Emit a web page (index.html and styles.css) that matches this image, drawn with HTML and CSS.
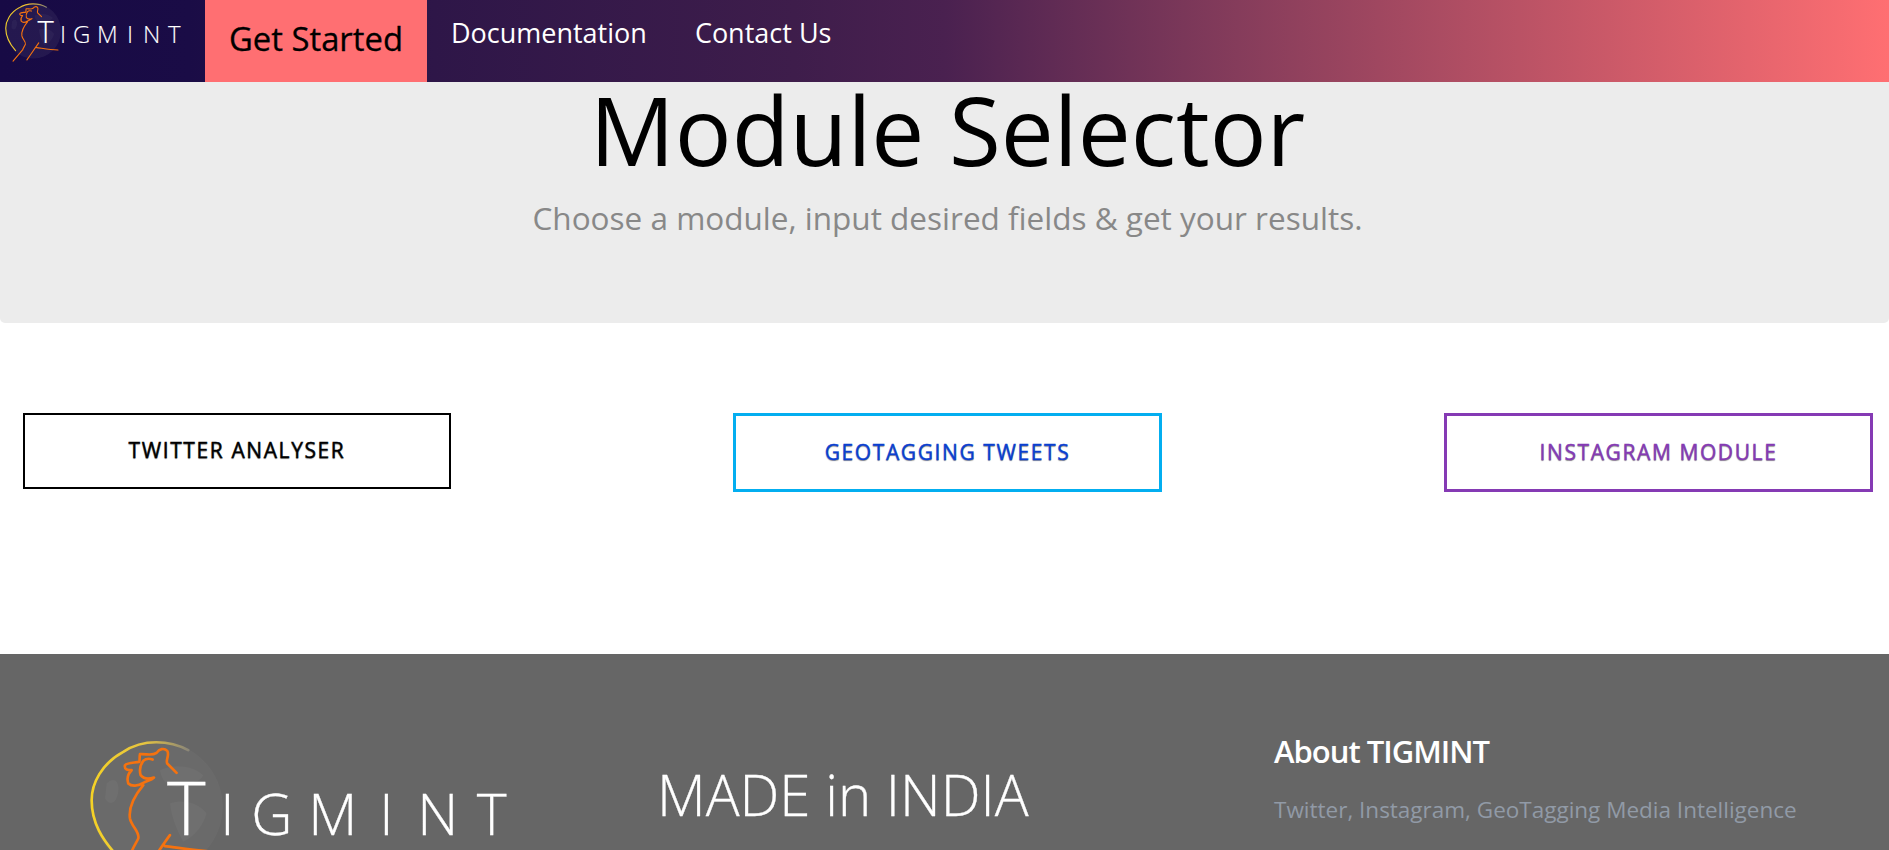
FILE: index.html
```html
<!DOCTYPE html>
<html lang="en">
<head>
<meta charset="utf-8">
<title>Tigmint - Module Selector</title>
<link rel="stylesheet" href="styles.css">
</head>
<body>
<header class="topbar">
  <a class="brand" href="#">
    <svg class="logo logo-small" viewBox="0 0 185 82" aria-label="Tigmint logo">
      <defs>
        <linearGradient id="arcA" x1="1" y1="0" x2="0" y2="0">
          <stop offset="0" stop-color="#8a8470"/><stop offset="0.45" stop-color="#e8b830"/><stop offset="1" stop-color="#f2d02c"/>
        </linearGradient>
      </defs>
      <circle class="globe globe-dark" cx="33.5" cy="31" r="27.5"/>
      <g transform="translate(-7.58 -5.47) scale(.14035)">
        <path class="land" d="M300 150C340 130 400 135 430 165C420 190 380 185 360 200C330 205 305 185 300 150ZM330 250C370 235 420 250 440 280C430 320 400 350 370 365C350 330 335 290 330 250ZM140 190C160 170 180 180 175 215C170 250 150 260 135 235Z"/>
        <path class="arc" stroke="url(#arcA)" d="M385 90C330 60 250 55 190 95C125 130 95 190 95 240C95 310 130 360 165 400"/>
        <path class="fig" d="M350 158L322 130C316 120 330 105 322 92C312 82 298 86 290 98C275 108 258 100 240 102C238 112 240 120 238 125C220 128 200 128 195 135C192 150 205 150 215 150C205 160 200 175 205 190C215 200 235 198 250 188C262 182 275 180 282 172C265 178 250 175 242 165C238 150 240 135 250 122C258 115 270 115 278 118M250 195C225 225 205 260 210 295C215 320 240 335 235 355C228 370 220 380 215 395L147 474M330 345C315 365 285 410 246 466M315 378C340 380 400 392 467 395"/>
      </g>
      <text class="logo-text" y="43"><tspan class="logo-t" x="37.5">T</tspan><tspan x="60">I</tspan><tspan x="73">G</tspan><tspan x="97">M</tspan><tspan x="127">I</tspan><tspan x="143">N</tspan><tspan x="168">T</tspan></text>
    </svg>
  </a>
  <a class="nav-active" href="#">Get Started</a>
  <nav class="nav">
    <a href="#">Documentation</a>
    <a href="#">Contact Us</a>
  </nav>
</header>

<section class="jumbo">
  <h1>Module Selector</h1>
  <p>Choose a module, input desired fields &amp; get your results.</p>
</section>

<main class="modules">
  <a class="mod mod-twitter" href="#">TWITTER ANALYSER</a>
  <a class="mod mod-geo" href="#">GEOTAGGING TWEETS</a>
  <a class="mod mod-insta" href="#">INSTAGRAM MODULE</a>
</main>

<footer class="footer">
  <div class="foot-logo">
    <svg class="logo logo-large" viewBox="0 0 185 82" aria-label="Tigmint logo">
      <defs>
        <linearGradient id="arcB" x1="1" y1="0" x2="0" y2="0">
          <stop offset="0" stop-color="#8a8678"/><stop offset="0.45" stop-color="#e6c440"/><stop offset="1" stop-color="#f5d226"/>
        </linearGradient>
      </defs>
      <circle class="globe" cx="33.5" cy="31" r="27.5"/>
      <g transform="translate(-7.58 -5.47) scale(.14035)">
        <path class="land" d="M300 150C340 130 400 135 430 165C420 190 380 185 360 200C330 205 305 185 300 150ZM330 250C370 235 420 250 440 280C430 320 400 350 370 365C350 330 335 290 330 250ZM140 190C160 170 180 180 175 215C170 250 150 260 135 235Z"/>
        <path class="arc" stroke="url(#arcB)" d="M385 90C330 60 250 55 190 95C125 130 95 190 95 240C95 310 130 360 165 400"/>
        <path class="fig" d="M350 158L322 130C316 120 330 105 322 92C312 82 298 86 290 98C275 108 258 100 240 102C238 112 240 120 238 125C220 128 200 128 195 135C192 150 205 150 215 150C205 160 200 175 205 190C215 200 235 198 250 188C262 182 275 180 282 172C265 178 250 175 242 165C238 150 240 135 250 122C258 115 270 115 278 118M250 195C225 225 205 260 210 295C215 320 240 335 235 355C228 370 220 380 215 395L147 474M330 345C315 365 285 410 246 466M315 378C340 380 400 392 467 395"/>
      </g>
      <text class="logo-text" y="43"><tspan class="logo-t" x="37.5">T</tspan><tspan x="60">I</tspan><tspan x="73">G</tspan><tspan x="97">M</tspan><tspan x="127">I</tspan><tspan x="143">N</tspan><tspan x="168">T</tspan></text>
    </svg>
  </div>
  <div class="foot-made">MADE in INDIA</div>
  <div class="foot-about">
    <h5>About TIGMINT</h5>
    <p>Twitter, Instagram, GeoTagging Media Intelligence</p>
  </div>
</footer>
</body>
</html>
```

FILE: styles.css
```css
* { box-sizing: border-box; }
html, body { margin: 0; height: 850px; overflow: hidden; }
body { font-family: "Open Sans", sans-serif; background: #fff; color: #000; }
a { text-decoration: none; color: inherit; }

.topbar {
  display: flex;
  height: 82px;
  background: linear-gradient(90deg, #170a45 0%, #1a0c46 10%, #2e1648 23%, #3e1d4b 42%, #4a2150 50%, #853c5b 65.5%, #ff6f72 100%);
}
.brand { display: block; width: 205px; flex: none; }
.logo { display: block; overflow: visible; }
.logo-small { width: 185px; height: 82px; }
.globe { fill: #fff; fill-opacity: .03; }
.globe-dark { fill: #9a9ab0; fill-opacity: .1; }
.land { fill: #fff; fill-opacity: .035; }
.arc { fill: none; stroke-width: 8; stroke-linecap: round; }
.fig { fill: none; stroke: #f5720f; stroke-width: 8; stroke-linecap: round; stroke-linejoin: round; }
.logo-text { fill: #fff; stroke: #fff; stroke-width: .12; font-family: "Open Sans", sans-serif; font-weight: 300; font-size: 24px; }
.logo-t { font-size: 31px; }

.nav-active {
  display: flex;
  align-items: center;
  padding: 0 24px 6px;
  height: 82px;
  background: #ff6f72;
  color: #000;
  font-size: 32.8px;
  -webkit-text-stroke: .3px #000;
}
.nav { display: flex; gap: 48px; padding: 15px 0 0 24px; color: #fff; font-size: 27px; line-height: 36px; }

.jumbo {
  height: 241px;
  background: #ececec;
  border-radius: 0 0 5px 5px;
  text-align: center;
  padding-left: 6px;
}
.jumbo h1 { margin: 0; font-size: 94.5px; font-weight: 400; line-height: 96px; }
.jumbo p { margin: 16px 0 0; font-size: 31.5px; line-height: 48px; color: #888; }

.modules {
  display: flex;
  justify-content: space-between;
  align-items: flex-start;
  height: 331px;
  padding: 90px 16px 0 23px;
}
.mod {
  display: flex;
  align-items: center;
  justify-content: center;
  width: 429px;
  padding-bottom: 2px;
  font-size: 21px;
  font-weight: 500;
  letter-spacing: 1.6px;
  background: #fff;
  text-shadow: 0 1px 1px rgba(0, 0, 0, .45);
  -webkit-text-stroke: .4px currentColor;
}
.mod-twitter { width: 428px; height: 76px; padding-bottom: 3px; border: 2px solid #000; color: #000; }
.mod-geo { height: 79px; border: 3px solid #03aef0; color: #0a3fd0; }
.mod-insta { height: 79px; border: 3px solid #853ab4; color: #853ab4; }

.footer {
  display: flex;
  height: 196px;
  background: #666;
  color: #fff;
  overflow: hidden;
}
.foot-logo { width: 657px; padding: 79px 0 0 78px; flex: none; }
.logo-large { width: 439px; height: 195px; }
.foot-made { width: 617px; flex: none; padding-top: 99px; font-size: 56.4px; font-weight: 300; line-height: 84px; -webkit-text-stroke: .3px #fff; }
.foot-about { flex: 1; padding-top: 79px; }
.foot-about h5 { margin: 0; font-size: 31px; font-weight: 600; line-height: 36px; letter-spacing: -1px; }
.foot-about p { margin: 23px 0 0; font-size: 22.5px; line-height: 36px; color: #919aa6; }
```
